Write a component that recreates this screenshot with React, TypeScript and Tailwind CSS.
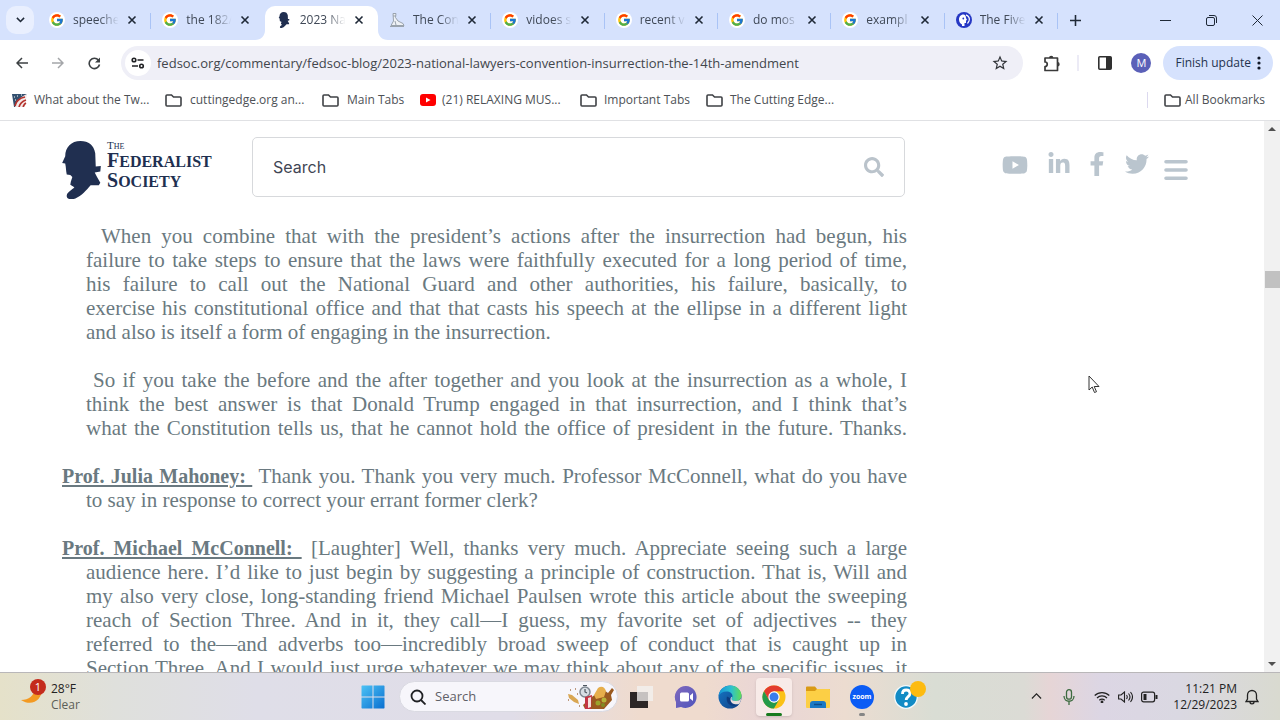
import React from "react";
import { FaFacebookF, FaLinkedinIn, FaSearch, FaTwitter, FaYoutube } from "react-icons/fa";
import { FcGoogle } from "react-icons/fc";

const BUST =
  "M18 0C26 0 31 4 32.500 12L33 25L38 24.500L37.500 30L32 31L34 35L37.500 41L36 43.500L28 43.500C24 48 19 54 13 56.500C9 58 4 57.500 4.500 53.500C5 50 10 48 12 45.500L8 43L8.500 40L10 35.500L8 33.500L4.500 33L4 30L3.500 25L3 22L0 21.500L3 15C3 6 9 0 18 0Z";

function Bust({ className }: { className: string }) {
  return (
    <svg viewBox="0 0 38 57" className={className} fill="#202f50" aria-hidden="true">
      <path d={BUST} />
    </svg>
  );
}

function Statue() {
  return (
    <svg viewBox="0 0 16 16" className="size-4" fill="none" stroke="#9aa3ad" strokeWidth="1" aria-hidden="true">
      <path d="M4 1.500h3l-.5 4L9 9l5 2.500 1 2H2L4.500 9z" fill="#eef1f5" />
      <path d="M1 14.500h14M6 9l1 4M4 4h3" />
    </svg>
  );
}

function Pbs() {
  return (
    <svg viewBox="0 0 16 16" className="size-4" aria-hidden="true">
      <circle cx="8" cy="8" r="8" fill="#2638c4" />
      <path d="M7.500 2.500C4.500 2.500 3 5 3 7.500S4.500 12 6 12.500V14h2.500v-3H10V8.500l1-.5-1-2c0-2-1-3.500-2.500-3.500z" fill="#fff" />
      <path d="M10 2.800c3 1 4 4 3 6.200l-1.500 2.500" fill="none" stroke="#fff" strokeWidth="1.300" />
      <circle cx="7.300" cy="6.500" r=".9" fill="#2638c4" />
    </svg>
  );
}

type IconKind = "google" | "bust" | "statue" | "pbs";

const tabs: { title: string; icon: IconKind; active?: boolean }[] = [
  { title: "speeche", icon: "google" },
  { title: "the 182/", icon: "google" },
  { title: "2023 Na", icon: "bust", active: true },
  { title: "The Con", icon: "statue" },
  { title: "vidoes s", icon: "google" },
  { title: "recent v", icon: "google" },
  { title: "do mos", icon: "google" },
  { title: "exampl", icon: "google" },
  { title: "The Five", icon: "pbs" },
];

function Favicon({ kind }: { kind: IconKind }) {
  if (kind === "google")
    return (
      <span className="flex size-4 shrink-0 items-center justify-center rounded-full bg-white">
        <FcGoogle className="size-[14px]" />
      </span>
    );
  if (kind === "bust") return <Bust className="h-4 w-4" />;
  if (kind === "statue") return <Statue />;
  return <Pbs />;
}

function Close() {
  return (
    <svg viewBox="0 0 10 10" className="size-[10px]" stroke="currentColor" strokeWidth="1.600" aria-hidden="true">
      <path d="M1.500 1.500l7 7M8.500 1.500l-7 7" />
    </svg>
  );
}

function TabStrip() {
  return (
    <header className="flex h-10 shrink-0 bg-[#d6e2fd] text-[#1f2937]">
      <div className="w-[38px] shrink-0 pl-[6px] pt-[6px]">
        <button aria-label="Search tabs" className="flex size-7 items-center justify-center rounded-[10px] bg-[#e9effe]">
          <svg viewBox="0 0 10 6" className="w-[9px]" fill="none" stroke="currentColor" strokeWidth="1.700">
            <path d="M1 1l4 4 4-4" />
          </svg>
        </button>
      </div>
      <div role="tablist" className="flex min-w-0 flex-1 pt-[6px]">
        {tabs.map((t, i) => (
          <div
            key={t.title}
            className={
              t.active
                ? "relative flex min-w-0 flex-1 items-center rounded-t-[10px] bg-white pb-[6px] pl-[11px]"
                : "relative flex min-w-0 flex-1 items-center pb-[6px] pl-[11px]"
            }
          >
            {t.active && (
              <>
                <svg viewBox="0 0 10 10" className="absolute -left-[10px] bottom-0 size-[10px]" fill="#fff">
                  <path d="M10 0v10H0C6 10 10 6 10 0z" />
                </svg>
                <svg viewBox="0 0 10 10" className="absolute -right-[10px] bottom-0 size-[10px]" fill="#fff">
                  <path d="M0 0v10h10C4 10 0 6 0 0z" />
                </svg>
              </>
            )}
            <Favicon kind={t.icon} />
            <button
              role="tab"
              aria-selected={!!t.active}
              className="ml-2 w-12 whitespace-nowrap text-left text-[12px] leading-5 text-[#3f4856] [mask-image:linear-gradient(to_right,black_55%,transparent_95%)]"
            >
              {t.title}
            </button>
            <button aria-label={"Close " + t.title} className="ml-[6px]">
              <Close />
            </button>
            {i !== 1 && i !== 2 && <span className="absolute right-0 top-[7px] h-4 w-px bg-[#a9c3f6]" />}
          </div>
        ))}
      </div>
      <div className="flex w-[222px] shrink-0 items-center">
        <button aria-label="New tab" className="ml-3">
          <svg viewBox="0 0 12 12" className="size-[11px]" stroke="currentColor" strokeWidth="1.700">
            <path d="M6 0v12M0 6h12" />
          </svg>
        </button>
        <div className="ml-auto flex items-center gap-[35px] pr-[17px]">
          <button aria-label="Minimize">
            <svg viewBox="0 0 11 11" className="size-[11px]" stroke="currentColor">
              <path d="M0 5.500h11" />
            </svg>
          </button>
          <button aria-label="Restore">
            <svg viewBox="0 0 11 11" className="size-[11px]" fill="none" stroke="currentColor">
              <rect x=".5" y="2.500" width="8" height="8" rx="1.500" />
              <path d="M3 .5h5a2.500 2.500 0 0 1 2.500 2.500v5" />
            </svg>
          </button>
          <button aria-label="Close window">
            <svg viewBox="0 0 11 11" className="size-[11px]" stroke="currentColor">
              <path d="M.5.5l10 10M10.500.5l-10 10" />
            </svg>
          </button>
        </div>
      </div>
    </header>
  );
}

function Arrow({ className }: { className: string }) {
  return (
    <svg viewBox="0 0 12 12" className={className} fill="none" stroke="currentColor" strokeWidth="1.500" aria-hidden="true">
      <path d="M12 6H1M6 1L1 6l5 5" />
    </svg>
  );
}

function Toolbar() {
  return (
    <nav className="flex h-[46px] shrink-0 items-center bg-white pl-4 pr-[7px] text-[#3c4043]">
      <button aria-label="Back">
        <Arrow className="size-3" />
      </button>
      <button aria-label="Forward" className="ml-6 text-[#a4a6a9]">
        <Arrow className="size-3 rotate-180" />
      </button>
      <button aria-label="Reload" className="ml-6">
        <svg viewBox="0 0 13 13" className="size-[13px]" fill="none" stroke="currentColor" strokeWidth="1.600">
          <path d="M11.500 7.500A5.200 5.200 0 1 1 10.500 3.200" />
          <path d="M12 .5v5H7z" fill="currentColor" stroke="none" />
        </svg>
      </button>
      <div className="ml-5 flex h-[34px] min-w-0 flex-1 items-center rounded-full bg-[#efeff7] pl-1 pr-[14px]">
        <button aria-label="Site information" className="flex size-[26px] items-center justify-center rounded-full bg-white">
          <svg viewBox="0 0 14 12" className="h-3 w-[14px]" fill="none" stroke="#202124" strokeWidth="1.600">
            <circle cx="3" cy="3" r="1.800" />
            <path d="M6.500 3h6M1 9h6" />
            <circle cx="10.500" cy="9" r="1.800" />
          </svg>
        </button>
        <input
          aria-label="Address"
          defaultValue="fedsoc.org/commentary/fedsoc-blog/2023-national-lawyers-convention-insurrection-the-14th-amendment"
          className="ml-1 min-w-0 flex-1 bg-transparent px-[2px] text-[13px] leading-5 text-[#42464c] outline-none"
        />
        <button aria-label="Bookmark this tab">
          <svg viewBox="0 0 24 24" className="size-[18px]" fill="#303338">
            <path d="M22 9.240l-7.190-.62L12 2 9.190 8.630 2 9.240l5.460 4.730L5.820 21 12 17.270 18.180 21l-1.630-7.030L22 9.240zM12 15.400l-3.760 2.270 1-4.280-3.320-2.880 4.380-.38L12 6.100l1.710 4.040 4.380.38-3.320 2.880 1 4.280L12 15.400z" />
          </svg>
        </button>
      </div>
      <button aria-label="Extensions" className="ml-5">
        <svg viewBox="0 0 18 17" className="h-[17px] w-[18px]" fill="none" stroke="#3a3a3a" strokeWidth="1.700">
          <path d="M2 3h12.500v12.500H2v-4c3 0 3-4.500 0-4.500z" strokeLinejoin="round" />
          <path d="M6 3a2.200 2.200 0 0 1 4.400 0zM14.500 7a2.200 2.200 0 0 1 0 4.400z" fill="#3a3a3a" stroke="none" />
        </svg>
      </button>
      <span className="ml-4 h-4 w-[2px] bg-[#ecebf6]" />
      <button aria-label="Side panel" className="ml-[18px]">
        <svg viewBox="0 0 16 16" className="size-4">
          <rect x="1.800" y="1.800" width="12.400" height="12.400" rx="1" fill="none" stroke="#303030" strokeWidth="1.600" />
          <path d="M9 2h5v12H9z" fill="#303030" />
        </svg>
      </button>
      <button className="ml-[18px] size-5 rounded-full bg-[#5b60b8] text-center text-[11px] leading-5 text-white">M</button>
      <button className="ml-3 flex h-[34px] items-center whitespace-nowrap rounded-full bg-[#d6e2fd] pl-3 pr-3 text-[12px] text-[#24324f]">
        Finish update
        <svg viewBox="0 0 4 14" className="ml-[6px] h-[14px] w-1" fill="#111827">
          <circle cx="2" cy="2" r="1.600" />
          <circle cx="2" cy="7" r="1.600" />
          <circle cx="2" cy="12" r="1.600" />
        </svg>
      </button>
    </nav>
  );
}

function Folder() {
  return (
    <svg viewBox="0 0 17 13" className="h-[13px] w-[17px] shrink-0" fill="none" stroke="#3f4145" strokeWidth="1.600" aria-hidden="true">
      <path d="M1 2a1 1 0 0 1 1-1h4.500l2 2H15a1 1 0 0 1 1 1v7a1 1 0 0 1-1 1H2a1 1 0 0 1-1-1z" />
    </svg>
  );
}

function FlagIcon() {
  return (
    <svg viewBox="0 0 15 13" className="h-[13px] w-[15px] shrink-0" aria-hidden="true">
      <path d="M0 0h15L5 13H2z" fill="#33506f" />
      <path d="M15 0l-2 13H3C4 8 9 2 15 0z" fill="#f4e9e8" />
      <path d="M3 12c1-5 5-8 10-9M7 13c1-4 4-6 7-7M11 13c1-2 1-3 3-4" fill="none" stroke="#b4322c" strokeWidth="1.700" />
      <path d="M2 3h1M5 2h1M3 6h1M9 1h1" stroke="#fff" />
    </svg>
  );
}

const bookmarkStyle = "flex shrink-0 items-center whitespace-nowrap";

function Bookmarks() {
  return (
    <nav
      aria-label="Bookmarks"
      className="flex h-[35px] shrink-0 items-center border-b border-[#e0e1e4] bg-white pb-[6px] pl-3 pr-[15px] text-[12px] leading-5 text-[#4d5156]"
    >
      <a href="#tw" className={bookmarkStyle + " w-[153px] gap-[7px]"}><FlagIcon />What about the Tw...</a>
      <a href="#cutting" className={bookmarkStyle + " w-[157px] gap-2"}><Folder />cuttingedge.org an...</a>
      <a href="#main" className={bookmarkStyle + " w-[98px] gap-2"}><Folder />Main Tabs</a>
      <a href="#music" className={bookmarkStyle + " w-[160px] gap-[6px]"}>
        <svg viewBox="0 0 16 12" className="h-3 w-4 shrink-0" aria-hidden="true">
          <rect width="16" height="12" rx="3" fill="#f00" />
          <path d="M6 3.500v5L10.500 6z" fill="#fff" />
        </svg>
        (21) RELAXING MUS...
      </a>
      <a href="#important" className={bookmarkStyle + " w-[126px] gap-[7px]"}><Folder />Important Tabs</a>
      <a href="#edge" className={bookmarkStyle + " gap-[7px]"}><Folder />The Cutting Edge...</a>
      <span className="ml-auto mr-4 h-4 w-px bg-[#dcd9ef]" />
      <a href="#all" className={bookmarkStyle + " gap-1"}><Folder />All Bookmarks</a>
    </nav>
  );
}

type Paragraph = { speaker?: string; lines: string[]; first?: string; open?: boolean };

const paragraphs: Paragraph[] = [
  {
    first: "block pl-[15px] [text-align-last:justify]",
    lines: [
      "When you combine that with the president’s actions after the insurrection had begun, his",
      "failure to take steps to ensure that the laws were faithfully executed for a long period of time,",
      "his failure to call out the National Guard and other authorities, his failure, basically, to",
      "exercise his constitutional office and that that casts his speech at the ellipse in a different light",
      "and also is itself a form of engaging in the insurrection.",
    ],
  },
  {
    first: "block pl-[7px] [text-align-last:justify]",
    lines: [
      "So if you take the before and the after together and you look at the insurrection as a whole, I",
      "think the best answer is that Donald Trump engaged in that insurrection, and I think that’s",
      "what the Constitution tells us, that he cannot hold the office of president in the future. Thanks.",
    ],
    open: true,
  },
  {
    speaker: "Prof. Julia Mahoney:",
    lines: [
      "Thank you. Thank you very much. Professor McConnell, what do you have",
      "to say in response to correct your errant former clerk?",
    ],
  },
  {
    speaker: "Prof. Michael McConnell:",
    open: true,
    lines: [
      "[Laughter] Well, thanks very much. Appreciate seeing such a large",
      "audience here. I’d like to just begin by suggesting a principle of construction. That is, Will and",
      "my also very close, long-standing friend Michael Paulsen wrote this article about the sweeping",
      "reach of Section Three. And in it, they call—I guess, my favorite set of adjectives -- they",
      "referred to the—and adverbs too—incredibly broad sweep of conduct that is caught up in",
      "Section Three. And I would just urge whatever we may think about any of the specific issues, it",
    ],
  },
];

function Transcript() {
  return (
    <article className="flex max-w-[845px] flex-col gap-6 font-['Liberation_Serif',serif] text-[21px] leading-6 text-[#6a7980]">
      {paragraphs.map((p) => (
        <p key={p.lines[0]} className="whitespace-nowrap pl-6">
          {p.lines.map((line, i) => {
            const last = i === p.lines.length - 1 && !p.open;
            const cls =
              i === 0
                ? p.speaker
                  ? "-ml-6 block [text-align-last:justify]"
                  : p.first
                : last
                  ? "block"
                  : "block [text-align-last:justify]";
            return (
              <span key={line} className={cls}>
                {i === 0 && p.speaker && (
                  <>
                    <strong className="text-[20px] underline decoration-2 underline-offset-2">{p.speaker + "\u00a0"}</strong>{" "}
                  </>
                )}
                {line}{" "}
              </span>
            );
          })}
        </p>
      ))}
    </article>
  );
}

function Page() {
  return (
    <div className="relative flex min-h-0 flex-1 bg-white">
      <main className="min-w-0 flex-1 overflow-hidden pl-[62px]">
        <div className="flex h-[76px] items-start pt-4">
          <a href="#home" aria-label="The Federalist Society" className="flex w-[190px] shrink-0 pt-1 text-[#202f50]">
            <Bust className="h-[58px] w-[39px]" />
            <span className="ml-[6px] flex flex-col font-['Liberation_Serif',serif] font-bold">
              <span className="text-[11px] font-normal leading-[9px]">T<span className="text-[8px]">HE</span></span>
              <span className="text-[20px] leading-[18px]">F<span className="text-[16px]">EDERALIST</span></span>
              <span className="text-[20px] leading-[18px]">S<span className="text-[16px]">OCIETY</span></span>
            </span>
          </a>
          <form className="flex h-[60px] max-w-[653px] flex-1 items-center rounded-[5px] border border-[#d7d9dc] pl-5 pr-5">
            <input
              aria-label="Search"
              placeholder="Search"
              className="min-w-0 flex-1 bg-transparent font-[Inter,sans-serif] text-[16px] text-[#3f4654] outline-none placeholder:text-[#3f4654]"
            />
            <button aria-label="Submit search" className="text-[#bac3cb]"><FaSearch className="size-5" /></button>
          </form>
          <nav className="ml-auto flex items-start pr-[76px] pt-[15px] text-[#bac5ce]">
            <a href="#youtube" aria-label="YouTube"><FaYoutube className="size-[26px]" /></a>
            <a href="#linkedin" aria-label="LinkedIn" className="ml-[19px]"><FaLinkedinIn className="size-6" /></a>
            <a href="#facebook" aria-label="Facebook" className="ml-[14px]"><FaFacebookF className="size-6" /></a>
            <a href="#twitter" aria-label="Twitter" className="ml-4"><FaTwitter className="size-6" /></a>
            <button aria-label="Menu" className="ml-[15px] mt-2">
              <svg viewBox="0 0 24 20" className="h-5 w-6" stroke="currentColor" strokeWidth="3.600" strokeLinecap="round">
                <path d="M2 1.800h20M2 10h20M2 18.200h20" />
              </svg>
            </button>
          </nav>
        </div>
        <div className="pt-[27px]">
          <Transcript />
        </div>
      </main>
      <div className="flex w-4 shrink-0 flex-col items-center bg-[#f1f1f1] py-[5px]">
        <svg viewBox="0 0 8 5" className="w-2" fill="#505050"><path d="M0 5l4-4 4 4z" /></svg>
        <span className="mt-[140px] h-[17px] w-[15px] bg-[#c1c1c1]" />
        <svg viewBox="0 0 8 5" className="mt-auto w-2" fill="#505050"><path d="M0 0l4 4 4-4z" /></svg>
      </div>
      <svg viewBox="0 0 12 19" className="absolute left-[1088px] top-[254px] h-[19px] w-3" fill="#fff" stroke="#333" aria-hidden="true">
        <path d="M1 1v14l3.200-3 2.300 5.500 2-.8-2.300-5.200H11z" />
      </svg>
    </div>
  );
}

function Windows() {
  return (
    <svg viewBox="0 0 24 24" className="size-6">
      <defs>
        <linearGradient id="win" x1="0" y1="0" x2="1" y2="1">
          <stop stopColor="#4cc2f5" /><stop offset="1" stopColor="#0a6fd0" />
        </linearGradient>
      </defs>
      <path fill="url(#win)" d="M1 .5h10.500V11.500H.5V1zM12.500.5H23l.5.5v10.500h-11zM.5 12.500h11v11H1l-.5-.5zM12.500 12.500h11V23l-.5.5H12.500z" />
    </svg>
  );
}

function SearchArt() {
  return (
    <svg viewBox="0 0 50 26" className="h-[26px] w-[50px]" aria-hidden="true">
      <path d="M3 10l4 1 6 5 1 4-5-2-5-4z" fill="#d9a652" />
      <path d="M5 6h1M12 10h1M3 16h1M14 22h1M10 5h1" stroke="#a97a54" strokeWidth="1.500" />
      <circle cx="20" cy="8" r="5" fill="#d7dde4" stroke="#7e8791" strokeWidth="1.500" />
      <path d="M20 5v3l2 1M18 1.500h4" stroke="#4d5660" strokeWidth="1.200" fill="none" />
      <path d="M18 21l10-9 11-6 4 3 4-5 2 2-3 5 1 5-8 9H20z" fill="#9a5a20" />
      <path d="M29 11l4-7c4-3 7 0 8 3l-2 6-8 2z" fill="#e6ae4b" />
      <path d="M20 13l7-2-1 14h-6z" fill="#c33444" /><path d="M23 14l3-1v10l-3 1z" fill="#f6dfdb" />
      <circle cx="33" cy="19" r="2.500" fill="#9ba52d" /><circle cx="39" cy="16" r="2.500" fill="#b5b43a" /><circle cx="38" cy="21" r="2" fill="#7f8a23" />
    </svg>
  );
}

function TaskView() {
  return (
    <svg viewBox="0 0 24 24" className="size-6">
      <path d="M0 7h18v16H0z" fill="#2c2626" />
      <path d="M7 1h16v15H7z" fill="#f3f0ef" fillOpacity=".82" />
      <path d="M7 7h11v9H7z" fill="#c6c2c1" />
    </svg>
  );
}

function Chat() {
  return (
    <svg viewBox="0 0 24 24" className="size-6">
      <defs>
        <linearGradient id="chat" x1="0" y1="0" x2="1" y2="1">
          <stop stopColor="#8069bd" /><stop offset="1" stopColor="#4f55bd" />
        </linearGradient>
      </defs>
      <path d="M12 1a11 11 0 1 1-5 21l-5 1V17A11 11 0 0 1 12 1z" fill="url(#chat)" />
      <rect x="6" y="7.500" width="9" height="9" rx="1.500" fill="#fff" /><path d="M16 10.500l3-2.500v8l-3-2.500z" fill="#fff" />
    </svg>
  );
}

function Edge() {
  return (
    <svg viewBox="0 0 24 24" className="size-6">
      <defs>
        <linearGradient id="edgeTop" x1="0" x2="1"><stop stopColor="#1593d7" /><stop offset=".55" stopColor="#2dc0cf" /><stop offset="1" stopColor="#62dc54" /></linearGradient>
        <linearGradient id="edgeLow" x1="0" x2="1" y2="1"><stop stopColor="#1478c8" /><stop offset="1" stopColor="#123f83" /></linearGradient>
      </defs>
      <circle cx="12" cy="12" r="11.500" fill="url(#edgeLow)" />
      <path d="M.6 11C1.500 4.500 6.500.5 12.500.5 19 .5 23.500 5.500 23.500 10.500c0 3.500-2.600 5.500-5.500 5.500-3 0-4.500-1-4.500-2 0-.8 1-1.200 1-3 0-2.500-2.500-4.500-6-4.500-3.800 0-6.700 2-7.900 4.500z" fill="url(#edgeTop)" />
      <path d="M9 11.500c-1.500 5 2 9.500 7 9.500 2 0 4-.8 5-1.800-2.500 1.300-9 .3-9-6.200z" fill="#0d3c80" />
      <path d="M13.500 14c0 1 1.500 2 4.500 2 2.500 0 4.500-1.200 5.200-3-.1 2.800-1.100 4.800-2.400 6-3 1-8.300 0-8.300-4.500 0-1.300.5-2.200 1.300-2.800.4 1-.3 1.500-.3 2.300z" fill="#e8dedc" />
    </svg>
  );
}

function Chrome() {
  return (
    <svg viewBox="0 0 24 24" className="size-6">
      <circle cx="12" cy="12" r="11.500" fill="#fbc116" />
      <path d="M2 6.200A11.500 11.500 0 0 1 22 6.200H12L7 15z" fill="#e33b2e" />
      <path d="M2 6.200L7 14.900l5 2.800 4.900-2.800-5 8.600A11.500 11.500 0 0 1 2 6.200z" fill="#249a4a" />
      <circle cx="12" cy="12" r="5.700" fill="#fff" /><circle cx="12" cy="12" r="4.500" fill="#3b7ded" />
    </svg>
  );
}

function Explorer() {
  return (
    <svg viewBox="0 0 24 24" className="size-6">
      <path d="M0 2.500a1 1 0 0 1 1-1h8l2 2.500h12a1 1 0 0 1 1 1V10H0z" fill="#d99a14" />
      <path d="M0 6h9l2-2h12a1 1 0 0 1 1 1v17a1 1 0 0 1-1 1H1a1 1 0 0 1-1-1z" fill="#fccf45" />
      <path d="M4 23v-4a3 3 0 0 1 3-3h10a3 3 0 0 1 3 3v4z" fill="#1979c5" />
      <path d="M8 19.500h8" stroke="#0c4c89" strokeWidth="1.500" />
    </svg>
  );
}

function Zoom() {
  return (
    <span className="flex size-6 items-center justify-center rounded-full bg-[#0b5cf5] pb-[1px] text-[7px] font-bold leading-none text-white">
      zoom
    </span>
  );
}

function Help() {
  return (
    <span className="relative block size-6">
      <svg viewBox="0 0 24 24" className="size-6">
        <circle cx="12" cy="12" r="11.300" fill="#128bc5" stroke="#f3fafc" strokeWidth="1.300" />
        <path d="M8.500 9c0-2.500 1.500-4 3.700-4s3.800 1.400 3.800 3.500c0 3-3.800 3.200-3.800 6.500" fill="none" stroke="#fff" strokeWidth="2.800" />
        <circle cx="12" cy="19" r="1.900" fill="#fff" />
      </svg>
      <span className="absolute -right-2 -top-1 size-4 rounded-full bg-[#fdbb10]" />
    </span>
  );
}

function Taskbar() {
  return (
    <footer className="flex h-12 shrink-0 items-center border-t border-[#b9b7b9] bg-[linear-gradient(to_right,#e5e1c9,#dfe0dc_9%,#dfdee8_20%,#e0dde8_40%,#efdbce_50%,#efdbce_55%,#e9d5d6_60%,#ecdcd0_66%,#d9ddd4_73%,#dbdbd5_80%,#e6d5d6_82%,#dcd6e4_86%,#dad8e2_92%,#d9dad0)] text-[#222]">
      <button className="flex w-[359px] shrink-0 items-center text-left text-[12px] leading-4">
        <span className="relative ml-5 h-8 w-[31px]">
          <svg viewBox="0 0 24 24" className="h-[26px] w-6">
            <path d="M22 7C22 18 12 25 1 18c8 0 13-4 14-12z" fill="#f39a22" />
          </svg>
          <span className="absolute -top-[2px] left-[10px] size-4 rounded-full bg-[#c42b1c] text-center text-[11px] leading-4 text-white">1</span>
        </span>
        <span>28°F<br /><span className="text-[#5c5e58]">Clear</span></span>
      </button>
      <div className="flex min-w-0 flex-1 items-center">
        <button aria-label="Start" className="ml-[2px]"><Windows /></button>
        <label className="ml-[14px] flex h-[31px] w-[219px] items-center rounded-full border border-[#dadae2] bg-[#f7f6fb] pl-[10px] pr-[2px]">
          <svg viewBox="0 0 16 16" className="size-4" fill="none" stroke="#202124" strokeWidth="1.800"><circle cx="7" cy="7" r="5.500" /><path d="M11 11l4.500 4.500" /></svg>
          <input aria-label="Taskbar search" placeholder="Search" className="ml-[9px] w-[120px] flex-1 bg-transparent text-[13px] outline-none placeholder:text-[#5f6067]" />
          <SearchArt />
        </label>
        <button aria-label="Task view" className="ml-3"><TaskView /></button>
        <button aria-label="Chat" className="ml-5"><Chat /></button>
        <button aria-label="Edge" className="ml-5"><Edge /></button>
        <button aria-label="Chrome" className="relative ml-[14px] flex h-[38px] w-9 items-center justify-center rounded-[4px] bg-[#f8ebe8] shadow-sm">
          <Chrome />
          <span className="absolute bottom-0 h-[3px] w-4 rounded-full bg-[#187a1e]" />
        </button>
        <button aria-label="File Explorer" className="ml-[14px]"><Explorer /></button>
        <button aria-label="Zoom" className="relative ml-5 flex justify-center">
          <Zoom />
          <span className="absolute -bottom-[7px] h-[3px] w-[6px] rounded-full bg-[#858585]" />
        </button>
        <button aria-label="Get Help" className="ml-5"><Help /></button>
      </div>
      <div className="flex shrink-0 items-center pr-[21px]">
        <button aria-label="Hidden icons">
          <svg viewBox="0 0 12 7" className="w-[11px]" fill="none" stroke="currentColor" strokeWidth="1.300"><path d="M1 6l5-5 5 5" /></svg>
        </button>
        <button aria-label="Microphone" className="ml-[21px]">
          <svg viewBox="0 0 12 16" className="h-4 w-3" fill="none" stroke="#3d6b40" strokeWidth="1.300"><rect x="3.500" y=".7" width="5" height="9.500" rx="2.500" /><path d="M1 7c0 7 10 7 10 0M6 12.500V16" /></svg>
        </button>
        <button aria-label="Network, volume and battery" className="ml-[19px] flex items-center gap-2">
          <svg viewBox="0 0 16 12" className="h-3 w-4" fill="none" stroke="currentColor" strokeWidth="1.200"><path d="M.7 4.500a10.500 10.500 0 0 1 14.600 0M3 7a7 7 0 0 1 10 0M5.300 9.300a4 4 0 0 1 5.400 0" /><circle cx="8" cy="11" r=".8" fill="currentColor" /></svg>
          <svg viewBox="0 0 15 12" className="h-3 w-[15px]" fill="none" stroke="currentColor" strokeWidth="1.100"><path d="M.6 4H3l3.500-3v10L3 8H.6zM8.500 4q1.500 2 0 4M10.500 2.500q3 3.500 0 7M12.500 1q4 5 0 10" /></svg>
          <svg viewBox="0 0 17 12" className="h-3 w-[17px]" fill="none" stroke="currentColor" strokeWidth="1.200"><rect x=".6" y="1.200" width="13" height="9.600" rx="2" /><path d="M15.500 4v4" strokeWidth="2" /><path d="M2.500 3h3v6h-3z" fill="currentColor" stroke="none" /></svg>
        </button>
        <button className="w-[79px] text-right text-[12px] leading-4">11:21 PM<br />12/29/2023</button>
        <button aria-label="Notifications" className="ml-2">
          <svg viewBox="0 0 14 16" className="h-4 w-[14px]" fill="none" stroke="currentColor" strokeWidth="1.300"><path d="M2.500 10V6a4.500 4.500 0 0 1 9 0v4l1.500 2.500H1zM5 13c0 2.500 4 2.500 4 0" /></svg>
        </button>
      </div>
    </footer>
  );
}

export default function App() {
  return (
    <div className="flex h-screen flex-col overflow-hidden bg-white font-['Open_Sans',sans-serif]">
      <TabStrip />
      <Toolbar />
      <Bookmarks />
      <Page />
      <Taskbar />
    </div>
  );
}
